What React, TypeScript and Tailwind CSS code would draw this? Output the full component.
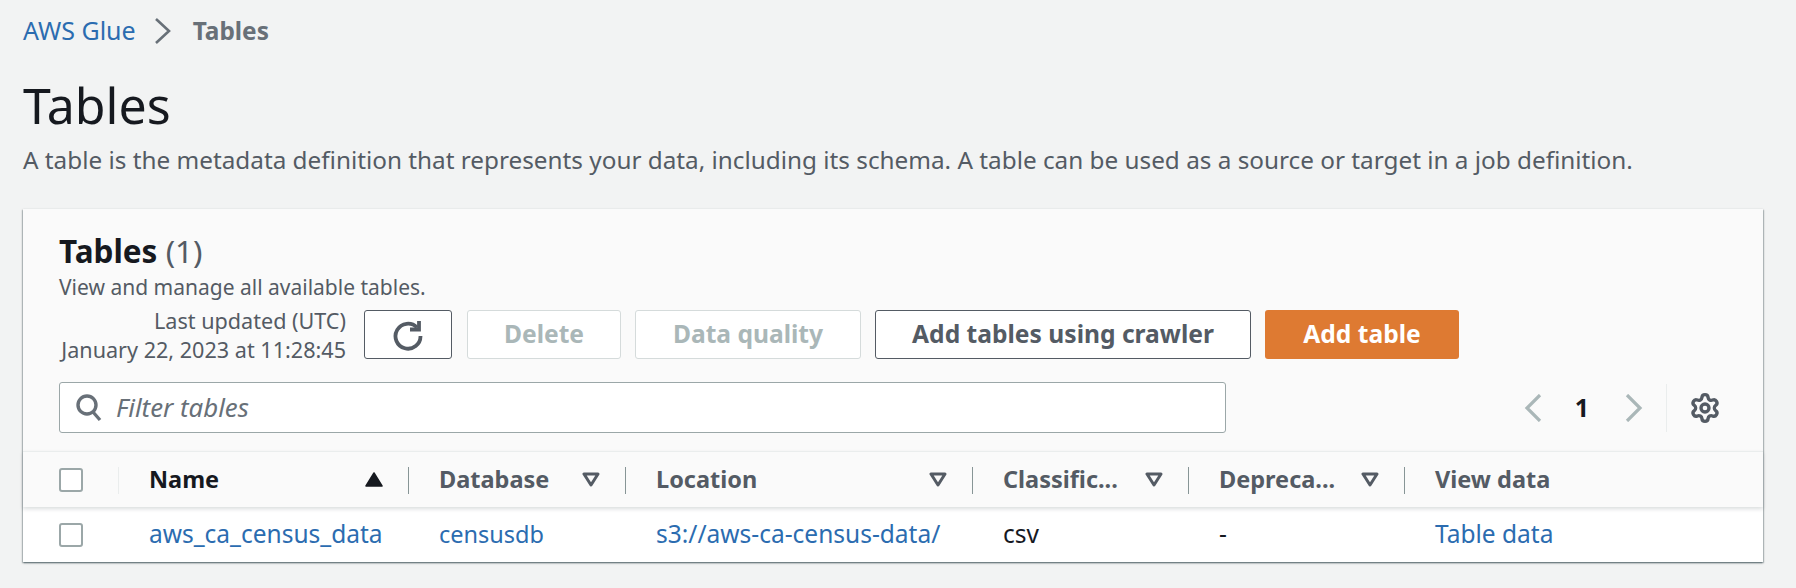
import { Settings } from "lucide-react"

const font = "font-['Noto_Sans','Open_Sans',sans-serif]"

function SortIcon({ active }: { active?: boolean }) {
  return (
    <svg width="18" height="15" viewBox="0 0 18 15" className="shrink-0">
      {active ? (
        <path d="M9 1 L17 14 H1 Z" fill="#16191f" stroke="#16191f" strokeWidth="1.5" strokeLinejoin="round" />
      ) : (
        <path d="M2 2 H16 L9 13 Z" fill="none" stroke="#545b64" strokeWidth="3" strokeLinejoin="round" />
      )}
    </svg>
  )
}

function Checkbox() {
  return <div className="size-6 rounded-[3px] border-2 border-[#9ba7a8] bg-white" />
}

function HeaderCell({
  label,
  active,
  last,
}: {
  label: string
  active?: boolean
  last?: boolean
}) {
  return (
    <div className="relative flex h-full items-center justify-between pl-[30px] pr-[26px]">
      <span className={active ? "text-[#16191f]" : "text-[#545b64]"}>{label}</span>
      {!last && <SortIcon active={active} />}
      {!last && <div className="absolute right-0 top-[15px] h-[27px] w-px bg-[#879596]" />}
    </div>
  )
}

export default function App() {
  return (
    <main className={`${font} h-[588px] w-[1796px] overflow-hidden bg-[#f2f3f3] px-[23px] pt-[14px]`}>
      <nav className="flex h-[34px] items-center text-[25px]">
        <a className="text-[#2b6cb0]">AWS Glue</a>
        <svg width="20" height="28" viewBox="0 0 20 28" fill="none" stroke="#687078" strokeWidth="2.6" className="ml-[17px] mr-5">
          <path d="M3 2 L16 14 L3 26" />
        </svg>
        <span className="text-[24.4px] font-bold text-[#687078]">Tables</span>
      </nav>

      <h1 className="mt-[23px] text-[50px] leading-[68px] text-[#16191f]">Tables</h1>
      <p className="mt-[5px] text-[24.3px] leading-8 text-[#545b64]">
        A table is the metadata definition that represents your data, including its schema. A table can be used as a source or target in a job definition.
      </p>

      <section className="mt-[33px] h-[353px] w-[1740px] bg-white shadow-[0_1px_2px_rgba(0,28,36,0.5),1px_1px_1px_rgba(0,28,36,0.15),-1px_1px_1px_rgba(0,28,36,0.15)]">
        <div className="h-[242px] bg-[#fafafa] px-9 pt-[23px]">
          <h2 className="text-[31.5px] leading-[38px] font-bold text-[#16191f]">
            Tables <span className="font-normal text-[#545b64]">(1)</span>
          </h2>
          <p className="mt-1 text-[21px] leading-[26px] text-[#545b64]">View and manage all available tables.</p>

          <div className="mt-[10px] flex h-[49px] items-center">
            <div className="w-[287px] text-right text-[21.6px] leading-[29px] whitespace-nowrap text-[#545b64]">
              <div>Last updated (UTC)</div>
              <div>January 22, 2023 at 11:28:45</div>
            </div>
            <button className="ml-[18px] flex h-[49px] w-[88px] items-center justify-center rounded-[3px] border border-[#545b64] bg-white">
              <svg width="32" height="32" viewBox="0 0 32 32" fill="none" stroke="#545b64" strokeWidth="3.8">
                <path d="M25 8.5 A12.5 12.5 0 1 0 28.5 17" />
                <path d="M27 2 V10.5 H18" />
              </svg>
            </button>
            <button className="ml-[15px] h-[49px] w-[154px] rounded-[3px] border border-[#d5dbdb] bg-white text-[24.6px] font-bold text-[#aab7b8]">Delete</button>
            <button className="ml-[14px] h-[49px] w-[226px] rounded-[3px] border border-[#d5dbdb] bg-white text-[24.6px] font-bold text-[#aab7b8]">Data quality</button>
            <button className="ml-[14px] h-[49px] w-[376px] rounded-[3px] border border-[#545b64] bg-white text-[24.6px] font-bold text-[#545b64]">Add tables using crawler</button>
            <button className="ml-[14px] h-[49px] w-[194px] rounded-[3px] bg-[#de7a32] text-[24.6px] font-bold text-white">Add table</button>
          </div>

          <div className="mt-[23px] flex items-center">
            <div className="flex h-[51px] w-[1167px] items-center rounded-[3px] border border-[#9ba7a8] bg-white pl-4">
              <svg width="26" height="28" viewBox="0 0 26 28" fill="none" stroke="#687078" strokeWidth="3.4" className="shrink-0">
                <circle cx="11" cy="11" r="9" />
                <path d="M17 18 L24 26" />
              </svg>
              <span className="ml-[14px] text-[25.8px] text-[#687078] italic">Filter tables</span>
            </div>
            <div className="ml-[298px] flex items-center">
              <svg width="18" height="28" viewBox="0 0 18 28" fill="none" stroke="#aab7b8" strokeWidth="3.2">
                <path d="M16 1 L3 14 L16 27" />
              </svg>
              <span className="ml-[32px] w-[16px] text-center text-[25px] font-bold text-[#16191f]">1</span>
              <svg width="18" height="28" viewBox="0 0 18 28" fill="none" stroke="#aab7b8" strokeWidth="3.2" className="ml-[35px]">
                <path d="M2 1 L15 14 L2 27" />
              </svg>
              <div className="ml-[23px] h-[48px] w-px bg-[#eaeded]" />
              <Settings size={32} strokeWidth={2.5} color="#545b64" className="ml-[22px]" />
            </div>
          </div>
        </div>

        <div className="relative grid h-[56px] grid-cols-[96px_290px_217px_347px_216px_216px_358px] border-t border-[#eaeded] bg-[#fafafa] text-[23.5px] font-bold shadow-[0_2px_4px_rgba(0,28,36,0.15)]">
          <div className="relative flex items-center pl-9">
            <Checkbox />
            <div className="absolute right-0 top-[15px] h-[27px] w-px bg-[#eaeded]" />
          </div>
          <HeaderCell label="Name" active />
          <HeaderCell label="Database" />
          <HeaderCell label="Location" />
          <HeaderCell label="Classific..." />
          <HeaderCell label="Depreca..." />
          <HeaderCell label="View data" last />
        </div>

        <div className="grid h-[55px] grid-cols-[96px_290px_217px_347px_216px_216px_358px] items-center text-[24.5px] text-[#2b6cb0]">
          <div className="pl-9"><Checkbox /></div>
          <a className="pl-[30px]">aws_ca_census_data</a>
          <a className="pl-[30px] text-[23.5px]">censusdb</a>
          <a className="pl-[30px]">s3://aws-ca-census-data/</a>
          <span className="pl-[30px] text-[#16191f]">csv</span>
          <span className="pl-[30px] text-[#16191f]">-</span>
          <a className="pl-[30px]">Table data</a>
        </div>
      </section>
    </main>
  )
}
